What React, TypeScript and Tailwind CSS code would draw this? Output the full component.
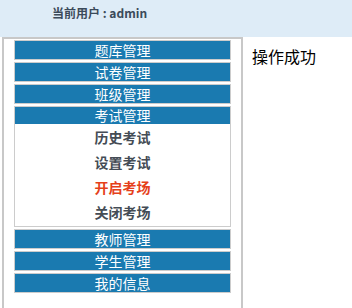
const menus = ["题库管理", "试卷管理", "班级管理"];
const subItems = [
  { label: "历史考试", active: false },
  { label: "设置考试", active: false },
  { label: "开启考场", active: true },
  { label: "关闭考场", active: false },
];
const moreMenus = ["教师管理", "学生管理", "我的信息"];

function MenuBar({ label }: { label: string }) {
  return (
    <div className="mb-[2px] h-[20px] border border-[#cccccc] bg-[#1a7ab0] text-center text-[14px] leading-[18px] text-white">
      {label}
    </div>
  );
}

export default function App() {
  return (
    <div
      className="h-[308px] w-[352px] overflow-hidden bg-white"
      style={{ fontFamily: '"Noto Sans CJK SC", "Noto Sans", sans-serif' }}
    >
      {/* Top bar */}
      <div className="h-[37px] bg-[#deecf7] pl-[52px] pt-[5px] text-[12px] font-bold leading-[16px] text-[#3b4a5a]">
        当前用户 : admin
      </div>

      <div className="flex">
        {/* Left menu */}
        <div className="ml-[2px] h-[300px] w-[241px] shrink-0 border-2 border-b-0 border-[#c8c8c8] px-[10px] pt-[1px]">
          {menus.map((m) => (
            <MenuBar key={m} label={m} />
          ))}
          <div className="h-[18px] border border-b-0 border-[#cccccc] bg-[#1a7ab0] text-center text-[14px] leading-[17px] text-white">
            考试管理
          </div>
          <div className="mb-[2px] border border-t-0 border-[#cccccc] bg-white py-[1px]">
            {subItems.map((s) => (
              <div
                key={s.label}
                className={`h-[25px] text-center text-[14px] font-bold leading-[25px] ${
                  s.active ? "text-[#e5401a]" : "text-[#444c55]"
                }`}
              >
                {s.label}
              </div>
            ))}
          </div>
          {moreMenus.map((m) => (
            <MenuBar key={m} label={m} />
          ))}
        </div>

        {/* Content */}
        <div className="ml-[9px] pt-[8px] text-[16px] leading-[22px] text-black">操作成功</div>
      </div>
    </div>
  );
}
